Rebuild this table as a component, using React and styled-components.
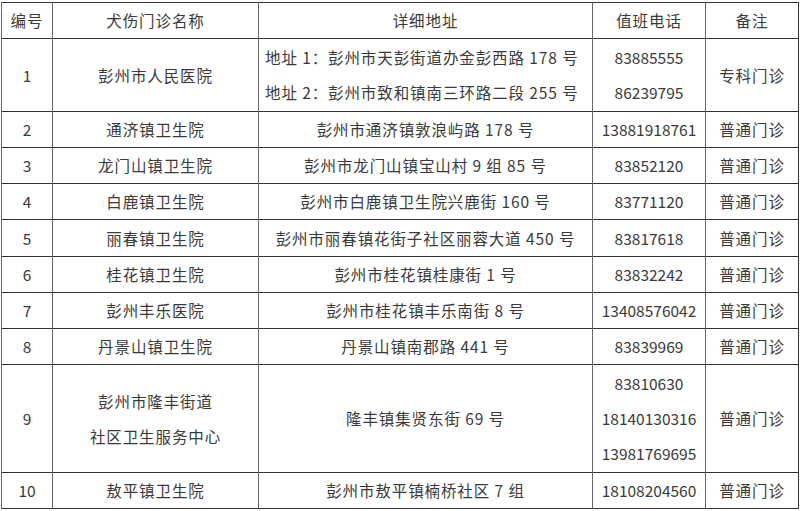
import React from "react";
import styled, { createGlobalStyle } from "styled-components";

const GlobalStyle = createGlobalStyle`
  html, body {
    margin: 0;
    padding: 0;
    background: #ffffff;
  }
  body {
    padding: 2px 0 0 1px;
    font-family: "Noto Sans CJK SC", "Noto Sans", sans-serif;
    color: #3a3a3a;
  }
`;

const rows = [
  {
    no: "1",
    name: ["彭州市人民医院"],
    address: ["地址 1：彭州市天彭街道办金彭西路 178 号", "地址 2：彭州市致和镇南三环路二段 255 号"],
    alignLeft: true,
    phone: ["83885555", "86239795"],
    note: "专科门诊",
    height: 73,
  },
  { no: "2", name: ["通济镇卫生院"], address: ["彭州市通济镇敦浪屿路 178 号"], phone: ["13881918761"], note: "普通门诊", height: 36 },
  { no: "3", name: ["龙门山镇卫生院"], address: ["彭州市龙门山镇宝山村 9 组 85 号"], phone: ["83852120"], note: "普通门诊", height: 36 },
  { no: "4", name: ["白鹿镇卫生院"], address: ["彭州市白鹿镇卫生院兴鹿街 160 号"], phone: ["83771120"], note: "普通门诊", height: 36 },
  { no: "5", name: ["丽春镇卫生院"], address: ["彭州市丽春镇花街子社区丽蓉大道 450 号"], phone: ["83817618"], note: "普通门诊", height: 37 },
  { no: "6", name: ["桂花镇卫生院"], address: ["彭州市桂花镇桂康街 1 号"], phone: ["83832242"], note: "普通门诊", height: 36 },
  { no: "7", name: ["彭州丰乐医院"], address: ["彭州市桂花镇丰乐南街 8 号"], phone: ["13408576042"], note: "普通门诊", height: 36 },
  { no: "8", name: ["丹景山镇卫生院"], address: ["丹景山镇南郡路 441 号"], phone: ["83839969"], note: "普通门诊", height: 36 },
  {
    no: "9",
    name: ["彭州市隆丰街道", "社区卫生服务中心"],
    address: ["隆丰镇集贤东街 69 号"],
    phone: ["83810630", "18140130316", "13981769695"],
    note: "普通门诊",
    height: 108,
  },
  { no: "10", name: ["敖平镇卫生院"], address: ["彭州市敖平镇楠桥社区 7 组"], phone: ["18108204560"], note: "普通门诊", height: 35 },
];

function Lines({ items }) {
  return items.map((t, i) => <Line key={i}>{t}</Line>);
}

export default function App() {
  return (
    <>
      <GlobalStyle />
      <Table>
        <colgroup>
          <col style={{ width: 51 }} />
          <col style={{ width: 206 }} />
          <col style={{ width: 334 }} />
          <col style={{ width: 113 }} />
          <col style={{ width: 93 }} />
        </colgroup>
        <thead>
          <Row height={35}>
            <Cell>编号</Cell>
            <Cell>犬伤门诊名称</Cell>
            <Cell>详细地址</Cell>
            <Cell>值班电话</Cell>
            <Cell>备注</Cell>
          </Row>
        </thead>
        <tbody>
          {rows.map((r) => (
            <Row key={r.no} height={r.height}>
              <Cell numeric>{r.no}</Cell>
              <Cell>
                <Lines items={r.name} />
              </Cell>
              <Cell left={r.alignLeft}>
                <Lines items={r.address} />
              </Cell>
              <Cell numeric>
                <Lines items={r.phone} />
              </Cell>
              <Cell>{r.note}</Cell>
            </Row>
          ))}
        </tbody>
      </Table>
    </>
  );
}

const Table = styled.table`
  width: 797px;
  table-layout: fixed;
  border-collapse: collapse;
  border: 1.5px solid #333;
`;

const Row = styled.tr`
  height: ${(p) => p.height}px;
  border-bottom: 1.5px solid #333;
`;

const Cell = styled.td`
  padding: 0;
  padding-left: ${(p) => (p.left ? "6px" : "0")};
  border-left: 1.5px solid #666;
  text-align: ${(p) => (p.left ? "left" : "center")};
  vertical-align: middle;
  font-size: 15.5px;
  letter-spacing: ${(p) => (p.numeric ? "0" : "0.9px")};
  line-height: 35px;
  white-space: nowrap;
`;

const Line = styled.div`
  line-height: 35px;
`;
